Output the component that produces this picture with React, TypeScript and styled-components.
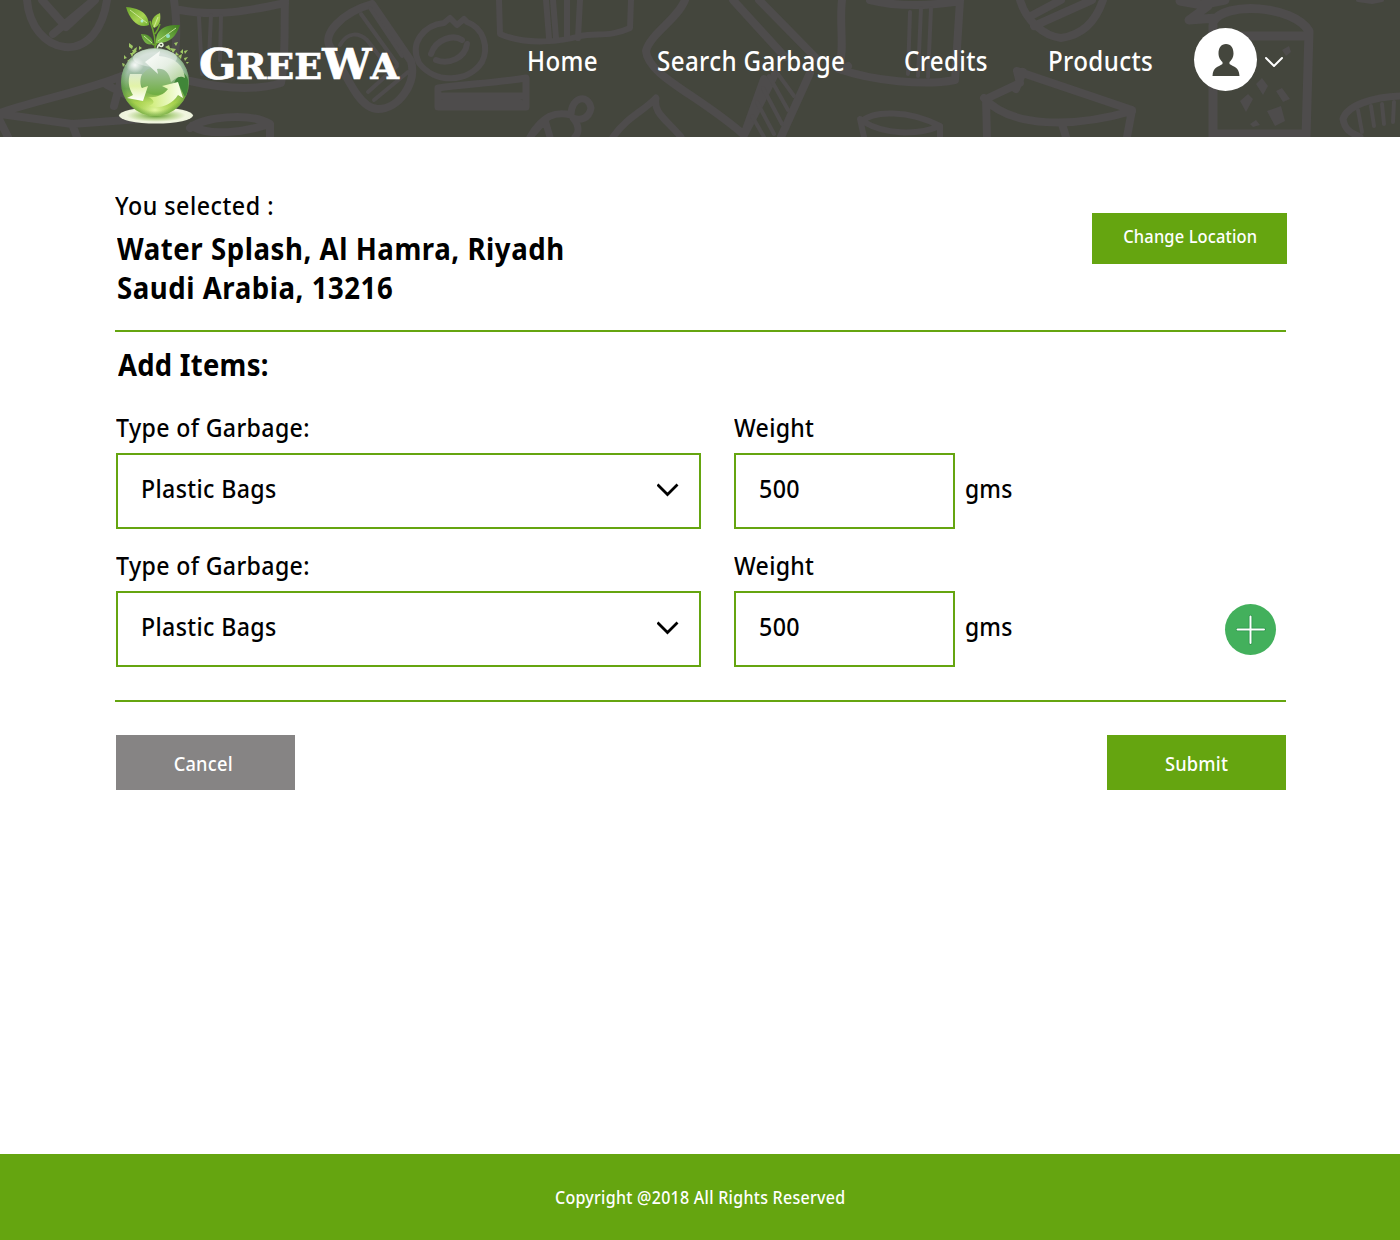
import React from "react";
import styled, { createGlobalStyle } from "styled-components";

const GREEN = "#65a510";

const GlobalStyle = createGlobalStyle`
  * { box-sizing: border-box; }
  body { margin: 0; background: #fff; }
`;

const Page = styled.div`
  width: 1400px;
  height: 1240px;
  display: flex;
  flex-direction: column;
  background: #fff;
  color: #000;
  font-family: "Noto Sans", "Open Sans", sans-serif;
  font-weight: 500;
`;

/* Text set slightly narrow; $k is the horizontal ratio */
const Narrow = styled.span<{ $k: number; $ls?: number; $origin?: string }>`
  display: inline-block;
  white-space: nowrap;
  letter-spacing: ${(p) => p.$ls ?? 0}px;
  transform: scaleX(${(p) => p.$k});
  transform-origin: ${(p) => p.$origin ?? "left"} center;
`;

const Header = styled.header`
  position: relative;
  height: 137px;
  background: #44463d;
  overflow: hidden;
`;

const Doodles = styled.svg`
  position: absolute;
  inset: 0;
`;

const HeaderRow = styled.div`
  position: relative;
  height: 137px;
  display: flex;
  padding-left: 115px;
`;

const Brand = styled.a`
  display: flex;
  width: 412px;
  height: 137px;
`;

const BrandName = styled.span`
  display: block;
  margin: 37px 0 0 3px;
  height: 56px;
  line-height: 56px;
  white-space: nowrap;
  color: #fff;
  font-family: "DejaVu Serif", serif;
  font-weight: 700;
  font-size: 35px;
  -webkit-text-stroke: 0.7px #fff;
`;

const BigCap = styled.span<{ $ls?: number }>`
  font-size: 42px;
  letter-spacing: ${(p) => p.$ls ?? 0}px;
`;

const Nav = styled.nav`
  display: grid;
  grid-template-columns: 130px 247px 144px 146px;
  padding-top: 43px;
`;

const NavLink = styled.a`
  color: #fff;
  font-size: 27px;
  line-height: 36px;
`;

const Account = styled.button`
  display: flex;
  align-items: center;
  gap: 8px;
  height: 63px;
  margin-top: 28px;
  padding: 0;
  border: 0;
  background: none;
`;

const Avatar = styled.span`
  display: grid;
  place-items: center;
  width: 63px;
  height: 63px;
  border-radius: 50%;
  background: #fff;
`;

const Main = styled.main`
  flex: 1;
  padding: 49px 114px 0 115px;
`;

const Location = styled.section`
  display: flex;
  justify-content: space-between;
  height: 146px;
  border-bottom: 2px solid ${GREEN};
`;

const Intro = styled.p`
  margin: 0;
  font-size: 26px;
  line-height: 38px;
`;

const Address = styled.address`
  margin: 5px 0 0 2px;
  font-style: normal;
  font-weight: 700;
  font-size: 31px;
  line-height: 39px;
`;

const Button = styled.button<{ $tone: string; $w: number; $h: number; $fs: number; $pad: string }>`
  width: ${(p) => p.$w}px;
  height: ${(p) => p.$h}px;
  padding: ${(p) => p.$pad};
  border: 0;
  background: ${(p) => p.$tone};
  color: #fff;
  font: 500 ${(p) => p.$fs}px/28px "Noto Sans", sans-serif;
`;

const ChangeSlot = styled.div`
  margin: 27px -1px 0 0;
`;

const Heading = styled.h2`
  margin: 12px 0 0 3px;
  font-size: 31px;
  line-height: 40px;
  font-weight: 700;
`;

const Items = styled.div`
  display: flex;
  flex-direction: column;
  gap: 19px;
  margin-top: 25px;
  height: 291px;
`;

const ItemRow = styled.div`
  display: grid;
  grid-template-columns: 618px 221px 270px 51px;
  padding-left: 1px;
  height: 119px;
`;

const Field = styled.div<{ $w: number }>`
  width: ${(p) => p.$w}px;
`;

const Label = styled.label`
  display: block;
  height: 44px;
  padding-left: 0.4px;
  font-size: 26px;
  line-height: 36px;
`;

const Box = styled.div`
  display: flex;
  justify-content: space-between;
  height: 76px;
  border: 2px solid ${GREEN};
  padding: 14px 20px 0 23px;
  font-size: 26px;
  line-height: 38px;
`;

const Chevron = styled.svg`
  margin-top: 13px;
`;

const Unit = styled.span`
  padding: 60px 0 0 10px;
  font-size: 26px;
  line-height: 38px;
`;

const AddButton = styled.button`
  width: 51px;
  height: 51px;
  margin-top: 57px;
  padding: 0;
  border: 0;
  border-radius: 50%;
  background: #43b05c;
`;

const Actions = styled.div`
  display: flex;
  justify-content: space-between;
  border-top: 2px solid ${GREEN};
  padding: 33px 0 0 1px;
`;

const Footer = styled.footer`
  height: 86px;
  padding-top: 29px;
  background: ${GREEN};
  color: #fff;
  text-align: center;
  font-size: 18px;
  line-height: 28px;
`;

function HeaderDoodles() {
  return (
    <Doodles width="1400" height="137" viewBox="0 0 1400 137" fill="none" stroke="#4e4c4c" strokeWidth="8" strokeLinecap="round" strokeLinejoin="round">
      <path d="M27 0C29 26 45 45 65 47C88 49 103 28 107 0M42 0L66 27L95 0M53 34L89 4" />
      <path d="M174 0C176 14 178 30 174 66M285 0C284 30 286 60 281 83C255 91 225 89 190 81M180 10C215 17 248 11 285 3" />
      <path d="M199 17L202 74M211 15L209 58M221 16L220 60" strokeWidth="4" />
      <path d="M0 113C30 102 85 91 122 76L114 106M0 114L72 124L140 119M72 124L77 137M0 121L8 137M107 85L136 100" />
      <path d="M190 128C202 117 250 112 270 124V137M192 126C210 137 244 132 270 124" />
      <path d="M331 48C320 35 343 12 372 4L411 61C417 83 399 109 378 109C363 109 353 91 331 48Z" />
      <path d="M340 45C348 31 359 33 367 40L390 70M361 14L397 64M370 8L402 56M368 92L397 66M374 100L408 72" strokeWidth="4" />
      <path d="M467 22C484 28 489 48 482 62C468 83 435 84 419 63C409 43 424 25 444 23L450 18L457 25L464 19ZM431 54C436 39 453 34 462 40M436 60C449 65 465 58 467 44" strokeWidth="6" />
      <path d="M438 88C465 84 496 83 526 78V107H438ZM443 96H523M443 103H520" strokeWidth="7" />
      <path d="M499 0L500 34C527 46 564 41 580 36C598 33 611 37 630 28L631 0M546 0L549 38M553 0L556 38M567 0V38M580 0L578 38" strokeWidth="6" />
      <path d="M685 0C677 20 650 34 646 51C648 76 699 95 744 135L764 79M733 0L785 57M759 0L816 58M744 135L775 74M781 137L810 73" />
      <path d="M769 76L788 110M763 88L782 124M757 102L774 134M778 74L794 96M752 116L764 137" strokeWidth="4" />
      <path d="M530 137C543 115 556 111 571 115C571 97 588 93 591 108C589 119 580 121 573 118C583 130 575 137 575 137M613 137C628 116 644 111 656 98C653 113 666 119 681 137M530 137L545 120L550 137" strokeWidth="7" />
      <path d="M842 0C839 25 845 48 839 69C873 81 925 86 955 80L960 0M870 0C890 5 920 7 954 2M842 70L848 66" />
      <path d="M910 12L908 74M921 8L918 76M931 8L928 77" strokeWidth="4" />
      <path d="M861 122C873 110 909 110 940 126M860 119L864 137M864 122C884 134 916 136 940 126V137" strokeWidth="6" />
      <path d="M1020 0C1026 21 1044 36 1061 38C1083 35 1096 21 1103 0M1029 17L1061 0M1034 26L1092 0" />
      <path d="M987 137L986 99L1020 83L1017 71L1132 110L1127 137M984 98C1011 128 1073 128 1132 111M1062 124L1066 137M1016 89L1023 72" />
      <path d="M1180 1L1208 6L1189 20L1216 18M1200 5L1225 0M1213 25V137M1213 22C1224 1 1293 5 1309 31L1306 137M1230 36H1303M1218 134H1304" strokeWidth="9" />
      <g fill="#4e4c4c" stroke="none">
        <path d="M1240 101l8-7 5 5-7 13zM1256 84l6-6 6 8-5 9zM1276 91l6-3 8 11-7 3zM1267 111l14-5 4 15-10 5zM1282 50l7-4 2 6-5 4zM1250 124l6-4 4 5-7 2z" />
      </g>
      <path d="M1400 96C1374 97 1347 105 1343 119C1345 131 1352 133 1360 137" strokeWidth="7" />
      <path d="M1358 110L1362 132M1371 106L1374 126M1382 104L1384 124M1394 102L1393 122" strokeWidth="4" />
      <path d="M1358 0L1372 2L1382 0" strokeWidth="4" />
    </Doodles>
  );
}

function GlobeLogo() {
  return (
    <svg width="81" height="128" viewBox="115 0 81 128">
      <defs>
        <linearGradient id="ball" x1="0" y1="0" x2="0" y2="1">
          <stop offset="0" stopColor="#d3ddd8" />
          <stop offset=".35" stopColor="#a3c0aa" />
          <stop offset=".6" stopColor="#6fa653" />
          <stop offset=".8" stopColor="#a5d04c" />
          <stop offset="1" stopColor="#86bd45" />
        </linearGradient>
        <radialGradient id="glow" cx=".5" cy=".82" r=".45">
          <stop offset="0" stopColor="#e4f8a0" />
          <stop offset="1" stopColor="#c4e565" stopOpacity="0" />
        </radialGradient>
        <radialGradient id="rim">
          <stop offset=".85" stopColor="#3d7f2c" stopOpacity="0" />
          <stop offset="1" stopColor="#3d7f2c" stopOpacity=".4" />
        </radialGradient>
        <radialGradient id="base">
          <stop offset="0" stopColor="#5f9a2c" />
          <stop offset=".45" stopColor="#b7d58e" />
          <stop offset=".8" stopColor="#f1f6df" />
          <stop offset="1" stopColor="#edf3dc" />
        </radialGradient>
        <radialGradient id="shine">
          <stop offset="0" stopColor="#fff" stopOpacity=".9" />
          <stop offset="1" stopColor="#fff" stopOpacity="0" />
        </radialGradient>
        <linearGradient id="leaf" x1="0" y1="0" x2="1" y2="1">
          <stop offset="0" stopColor="#6aa42c" />
          <stop offset=".6" stopColor="#a8d452" />
          <stop offset="1" stopColor="#6fae33" />
        </linearGradient>
        <linearGradient id="leafDark" x1="1" y1="0" x2="0" y2="1">
          <stop offset="0" stopColor="#3e7a20" />
          <stop offset="1" stopColor="#8ecb55" />
        </linearGradient>
        <linearGradient id="arrowLow" x1="0" y1="0" x2="1" y2="0">
          <stop offset="0" stopColor="#cdec72" />
          <stop offset="1" stopColor="#fbfff0" />
        </linearGradient>
        <linearGradient id="arrowLeft" x1="0" y1="0" x2="0" y2="1">
          <stop offset="0" stopColor="#dcebcf" />
          <stop offset=".45" stopColor="#e2f3a8" />
          <stop offset="1" stopColor="#fff" />
        </linearGradient>
        <linearGradient id="arrowTop" x1="0" y1="0" x2="1" y2="1">
          <stop offset="0" stopColor="#fff" />
          <stop offset=".5" stopColor="#e6efe4" />
          <stop offset="1" stopColor="#a9cc8c" />
        </linearGradient>
        <linearGradient id="core" x1="0" y1="0" x2="0" y2="1">
          <stop offset="0" stopColor="#a7c4a8" />
          <stop offset="1" stopColor="#6fae40" />
        </linearGradient>
      </defs>
      <ellipse cx="156" cy="115.500" rx="37" ry="8" fill="url(#base)" />
      <g fill="#9fc766">
        <path d="M129 43l4 3-1 3-3-2zM134 49l3-2-1 5-4 1zM139 46l3 2-3 2zM124 55l3 3-3 1zM127 61l4-3-1 5zM130 53l4 0-2 4zM174 43l4-1-2 4zM170 48l6 1-3 4zM180 52l3-3 0 5zM184 51l4-1-3 4zM178 56l4-2-1 5zM184 58l4-1-3 4zM186 62l3 0-2 2zM122 63l3 1-2 3zM124 66l3-2 0 4zM165 47l4-2 2 6zM132 50l5 1-3 3zM176 52l3 3-4 1z" />
      </g>
      <path d="M155 49C156 41 153 29 150 21M155 34C158 30 159 27 160 24M155 46C159 39 168 34 173 31M154 45L145 38" fill="none" stroke="#6ba52f" strokeWidth="1.600" />
      <path d="M126 7C138 8 148 12 149 25C139 29 130 21 126 7Z" fill="url(#leaf)" />
      <path d="M160 13C151 17 150 23 154 28C160 26 161 20 160 13Z" fill="url(#leaf)" />
      <path d="M180 25C166 24 155 29 156 43C169 44 176 37 180 25Z" fill="url(#leafDark)" />
      <path d="M141 34C148 34 153 37 153 44C146 46 143 41 141 34Z" fill="url(#leafDark)" />
      <path d="M130 10L147 23M158 17L154 27M176 28L158 41M144 36L152 43" fill="none" stroke="#d8efaa" strokeWidth=".8" />
      <circle cx="142" cy="21" r="1.500" fill="#b0ecd0" />
      <circle cx="168" cy="36" r="2" fill="#92dfc6" />
      <path d="M157 50C158 42 163 42 163 45C162 48 159 46 159 44" fill="none" stroke="#e9f5de" strokeWidth="1.600" />
      <circle cx="155" cy="82" r="34" fill="url(#ball)" />
      <ellipse cx="155" cy="99" rx="27" ry="17" fill="url(#glow)" />
      <circle cx="155" cy="82" r="34" fill="url(#rim)" />
      <ellipse cx="155" cy="58" rx="22" ry="9" fill="#e3ebe6" opacity=".6" />
      <path d="M183 72C187 76 189 80 188 84C188 90 187 94 185 97L178 83L174 84C175 79 179 76 183 72Z" fill="#408638" />
      <ellipse cx="156" cy="81" rx="15" ry="14" fill="url(#core)" />
      <ellipse cx="135" cy="65" rx="9" ry="8" fill="url(#shine)" />
      <path d="M145 62L160 51L159 56C175 57 184 66 185 78C179 74 174 80 171 82C169 72 164 68 157 69L158 74Z" fill="url(#arrowTop)" />
      <path d="M130 74L142 74C139 81 141 87 142 88L148 86L143 101L127 98L133 95C128 87 128 80 130 74Z" fill="url(#arrowLeft)" />
      <path d="M148 97C155 98 164 95 168 89L162 86L178 82L183 98L178 95C171 106 158 109 149 106C157 103 153 99 148 97Z" fill="url(#arrowLow)" />
    </svg>
  );
}

const Logo = () => (
  <Brand>
    <GlobeLogo />
    <BrandName>
      <Narrow $k={1.045}>
        <BigCap $ls={-0.5}>G</BigCap>REE<BigCap $ls={-1}>W</BigCap>A
      </Narrow>
    </BrandName>
  </Brand>
);

const Item = ({ last }: { last?: boolean }) => (
  <ItemRow>
    <Field $w={585}>
      <Label><Narrow $k={0.89} $ls={0.4}>Type of Garbage:</Narrow></Label>
      <Box>
        <Narrow $k={0.89} $ls={0.4}>Plastic Bags</Narrow>
        <Chevron width="22" height="18" viewBox="0 0 22 18" fill="none" stroke="#000" strokeWidth="2.800" strokeLinecap="butt">
          <path d="M0.500 2.500L10.500 12.500L20.500 2.500" />
        </Chevron>
      </Box>
    </Field>
    <Field $w={221}>
      <Label><Narrow $k={0.89} $ls={0.3}>Weight</Narrow></Label>
      <Box><Narrow $k={0.895} $ls={0.4}>500</Narrow></Box>
    </Field>
    <Unit><Narrow $k={0.88} $ls={0.2}>gms</Narrow></Unit>
    {last && (
      <AddButton aria-label="Add item">
        <svg width="51" height="51" viewBox="0 0 51 51" fill="none" strokeLinecap="round">
          <path d="M25.500 12.500V39M12.500 25.500H39" stroke="#279047" strokeWidth="3.500" />
          <path d="M25.500 12.500V39M12.500 25.500H39" stroke="#fff" strokeWidth="2" />
        </svg>
      </AddButton>
    )}
  </ItemRow>
);

export default function App() {
  return (
    <Page>
      <GlobalStyle />
      <Header>
        <HeaderDoodles />
        <HeaderRow>
          <Logo />
          <Nav>
            {["Home", "Search Garbage", "Credits", "Products"].map((t) => (
              <NavLink key={t}><Narrow $k={0.895} $ls={0.4}>{t}</Narrow></NavLink>
            ))}
          </Nav>
          <Account aria-label="Account">
            <Avatar>
              <svg width="28" height="32" viewBox="0 0 28 32" fill="#44463d">
                <path d="M14 0C19 0 21.500 4 21.500 9.500C21.500 14 19 16.500 17.500 18V20C22 23 27 23 27.500 32H.5C1 23 6 23 10.500 20V18C9 16.500 6.500 14 6.500 9.500C6.500 4 9 0 14 0Z" />
              </svg>
            </Avatar>
            <svg width="18" height="14" viewBox="0 0 18 14" fill="none" stroke="#fff" strokeWidth="2" strokeLinecap="round">
              <path d="M1 5L9 13L17 5" />
            </svg>
          </Account>
        </HeaderRow>
      </Header>
      <Main>
        <Location>
          <div>
            <Intro><Narrow $k={0.895} $ls={0.55}>You selected :</Narrow></Intro>
            <Address>
              <Narrow $k={0.89} $ls={0.62}>Water Splash, Al Hamra, Riyadh</Narrow>
              <br />
              <Narrow $k={0.89} $ls={0.6}>Saudi Arabia, 13216</Narrow>
            </Address>
          </div>
          <ChangeSlot>
            <Button $tone={GREEN} $w={195} $h={51} $fs={18.5} $pad="0 0 5px 1px">
              <Narrow $k={0.89} $ls={0.15} $origin="center">Change Location</Narrow>
            </Button>
          </ChangeSlot>
        </Location>
        <Heading><Narrow $k={0.885} $ls={0.3}>Add Items:</Narrow></Heading>
        <Items>
          <Item />
          <Item last />
        </Items>
        <Actions>
          <Button $tone="#868484" $w={179} $h={55} $fs={20.5} $pad="1px 4px 0 0">
            <Narrow $k={0.89} $ls={0.25} $origin="center">Cancel</Narrow>
          </Button>
          <Button $tone={GREEN} $w={179} $h={55} $fs={20.5} $pad="1px 0 0 1px">
            <Narrow $k={0.89} $ls={0.25} $origin="center">Submit</Narrow>
          </Button>
        </Actions>
      </Main>
      <Footer><Narrow $k={0.89} $ls={0.3} $origin="center">Copyright @2018 All Rights Reserved</Narrow></Footer>
    </Page>
  );
}
